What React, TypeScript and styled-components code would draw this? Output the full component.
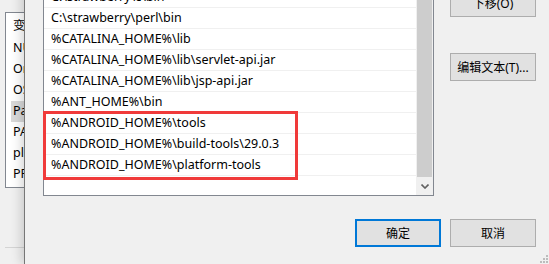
import styled, { createGlobalStyle } from 'styled-components';

const GlobalStyle = createGlobalStyle`
  html, body {
    margin: 0;
    padding: 0;
    overflow: hidden;
    background: #f0f0f0;
  }
  body {
    font-family: "Noto Sans", "Noto Sans CJK SC", sans-serif;
    color: #000;
  }
`;

const Desktop = styled.div`
  position: relative;
  width: 549px;
  height: 264px;
  overflow: hidden;
  background: #f0f0f0;
`;

// windows sit on a free canvas, so these two are placed by coordinates
const BackWindow = styled.div`
  position: absolute;
  left: -20px;
  top: -30px;
  width: 320px;
  height: 330px;
  box-sizing: border-box;
  padding: 42px 0 0 25px;
  display: flex;
  flex-direction: column;
  background: #f0f0f0;
`;

const VarList = styled.div`
  width: 260px;
  height: 176px;
  box-sizing: border-box;
  border: 1px solid #828790;
  background: #fff;
  display: flex;
  flex-direction: column;
`;

const VarItem = styled.div<{ $selected?: boolean; $header?: boolean }>`
  height: ${(p) => (p.$header ? '25px' : '21px')};
  box-sizing: border-box;
  margin-left: ${(p) => (p.$selected ? '5px' : '0')};
  padding-left: ${(p) => (p.$selected ? '2px' : '7px')};
  padding-bottom: 3px;
  display: flex;
  align-items: center;
  font-size: 12.5px;
  white-space: nowrap;
  background: ${(p) => (p.$selected ? '#d9d9d9' : 'transparent')};
`;

const Divider = styled.div`
  margin-top: 59px;
  height: 1px;
  background: #d4d4d4;
`;

const FrontWindow = styled.div`
  position: absolute;
  left: 24px;
  top: -47px;
  right: 0;
  bottom: 0;
  box-sizing: border-box;
  padding: 12px 13px 0 18px;
  display: grid;
  grid-template-columns: 391px 86px;
  grid-template-rows: 231px auto;
  column-gap: 16px;
  row-gap: 23px;
  background: #f0f0f0;
  border-left: 1px solid #767676;
  box-shadow: -3px 0 10px rgba(0, 0, 0, 0.16);
`;

const ListBox = styled.div`
  box-sizing: border-box;
  border: 1px solid #828790;
  background: #fff;
  display: flex;
  overflow: hidden;
`;

const Rows = styled.div`
  flex: 1;
  display: flex;
  flex-direction: column;
  min-width: 0;
`;

const Row = styled.div`
  height: 21px;
  flex: none;
  box-sizing: border-box;
  border-bottom: 1px solid #f0f0f0;
  padding: 0 0 1px 7px;
  display: flex;
  align-items: center;
  font-size: 12.5px;
  white-space: nowrap;
  overflow: hidden;
`;

const ScrollBar = styled.div`
  width: 17px;
  flex: none;
  display: flex;
  flex-direction: column;
  background: #f0f0f0;
`;

const Track = styled.div`
  flex: 1;
  display: flex;
  flex-direction: column;
  justify-content: flex-end;
  padding: 0 1px 1px;
`;

const Thumb = styled.div`
  height: 180px;
  background: #cdcdcd;
`;

const ArrowButton = styled.div`
  height: 17px;
  display: flex;
  align-items: center;
  justify-content: center;
`;

const SideButtons = styled.div`
  display: flex;
  flex-direction: column;
  padding-top: 24px;
`;

const Button = styled.div<{ $primary?: boolean; $gap?: number }>`
  width: 86px;
  height: 28px;
  box-sizing: border-box;
  margin-top: ${(p) => p.$gap ?? 0}px;
  border: ${(p) => (p.$primary ? '2px solid #0078d7' : '1px solid #adadad')};
  background: #e1e1e1;
  display: flex;
  align-items: center;
  justify-content: center;
  font-family: "Noto Sans", "Noto Sans CJK SC", sans-serif;
  font-size: 12px;
  white-space: nowrap;
`;

const Footer = styled.div`
  grid-column: 1 / -1;
  display: flex;
  justify-content: flex-end;
  gap: 9px;
`;

const Highlight = styled.div`
  position: absolute;
  left: 18px;
  top: 158px;
  width: 255px;
  height: 69px;
  box-sizing: border-box;
  border: 3px solid #f03a3a;
  pointer-events: none;
`;

const Grip = styled.svg`
  position: absolute;
  right: 1px;
  bottom: 1px;
`;

const vars = [
  'NUMBER_OF_PROCESSORS',
  'OneDrive',
  'OS',
  'Path',
  'PATHEXT',
  'platformcode',
  'PROCESSOR_ARCHITECTURE',
];

const paths = [
  'C:\\Program Files\\Git\\cmd',
  'C:\\strawberry\\c\\bin',
  'C:\\strawberry\\perl\\bin',
  '%CATALINA_HOME%\\lib',
  '%CATALINA_HOME%\\lib\\servlet-api.jar',
  '%CATALINA_HOME%\\lib\\jsp-api.jar',
  '%ANT_HOME%\\bin',
  '%ANDROID_HOME%\\tools',
  '%ANDROID_HOME%\\build-tools\\29.0.3',
  '%ANDROID_HOME%\\platform-tools',
];

export default function App() {
  return (
    <Desktop>
      <GlobalStyle />
      <BackWindow>
        <VarList>
          <VarItem $header>变量</VarItem>
          {vars.map((v) => (
            <VarItem key={v} $selected={v === 'Path'}>
              {v}
            </VarItem>
          ))}
        </VarList>
        <Divider />
      </BackWindow>

      <FrontWindow>
        <ListBox>
          <Rows>
            {paths.map((p) => (
              <Row key={p}>{p}</Row>
            ))}
          </Rows>
          <ScrollBar>
            <Track>
              <Thumb />
            </Track>
            <ArrowButton>
              <svg width="8" height="5" viewBox="0 0 8 5">
                <polyline points="0.5,0.5 4,4 7.5,0.5" fill="none" stroke="#606060" strokeWidth="1.6" />
              </svg>
            </ArrowButton>
          </ScrollBar>
        </ListBox>

        <SideButtons>
          <Button>下移(O)</Button>
          <Button $gap={36}>编辑文本(T)...</Button>
        </SideButtons>

        <Footer>
          <Button $primary>确定</Button>
          <Button>取消</Button>
        </Footer>

        <Highlight />
        <Grip width="8" height="8" viewBox="0 0 8 8">
          {[
            [6, 0],
            [3, 3],
            [6, 3],
            [0, 6],
            [3, 6],
            [6, 6],
          ].map(([x, y]) => (
            <rect key={`${x}-${y}`} x={x} y={y} width="2" height="2" fill="#bcbcbc" />
          ))}
        </Grip>
      </FrontWindow>
    </Desktop>
  );
}
